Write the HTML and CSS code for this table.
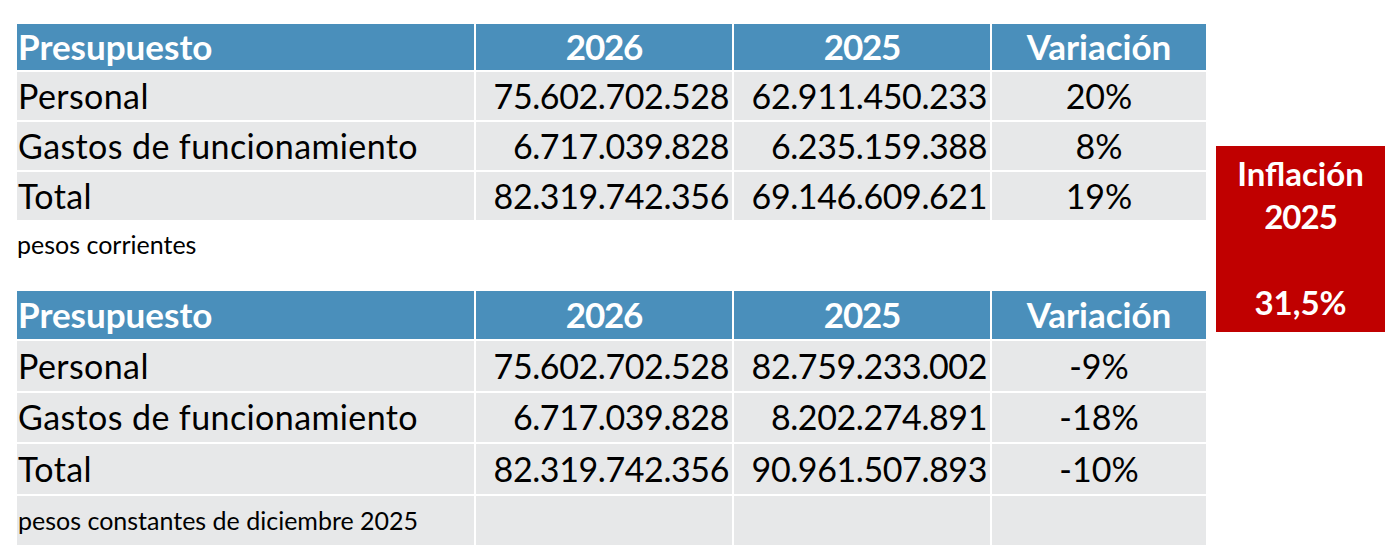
FILE: index.html
```html
<!DOCTYPE html>
<html lang="es">
<head>
<meta charset="utf-8">
<title>Presupuesto</title>
<link rel="stylesheet" href="styles.css">
</head>
<body>
<div class="page">
  <div class="tables">
    <table class="budget">
      <colgroup>
        <col class="c-name"><col class="c-num"><col class="c-num"><col class="c-var">
      </colgroup>
      <thead>
        <tr><th class="name">Presupuesto</th><th class="yr">2026</th><th class="yr">2025</th><th>Variación</th></tr>
      </thead>
      <tbody>
        <tr><td class="name">Personal</td><td class="num">75.602.702.528</td><td class="num">62.911.450.233</td><td class="var">20%</td></tr>
        <tr><td class="name">Gastos de funcionamiento</td><td class="num">6.717.039.828</td><td class="num">6.235.159.388</td><td class="var">8%</td></tr>
        <tr><td class="name">Total</td><td class="num">82.319.742.356</td><td class="num">69.146.609.621</td><td class="var">19%</td></tr>
      </tbody>
    </table>
    <p class="note">pesos corrientes</p>
    <table class="budget budget-tall">
      <colgroup>
        <col class="c-name"><col class="c-num"><col class="c-num"><col class="c-var">
      </colgroup>
      <thead>
        <tr><th class="name">Presupuesto</th><th class="yr">2026</th><th class="yr">2025</th><th>Variación</th></tr>
      </thead>
      <tbody>
        <tr><td class="name">Personal</td><td class="num">75.602.702.528</td><td class="num">82.759.233.002</td><td class="var">-9%</td></tr>
        <tr><td class="name">Gastos de funcionamiento</td><td class="num">6.717.039.828</td><td class="num">8.202.274.891</td><td class="var">-18%</td></tr>
        <tr><td class="name">Total</td><td class="num">82.319.742.356</td><td class="num">90.961.507.893</td><td class="var">-10%</td></tr>
        <tr class="foot"><td class="name">pesos constantes de diciembre 2025</td><td></td><td></td><td></td></tr>
      </tbody>
    </table>
  </div>
  <div class="inflation">
    <span>Inflación</span>
    <span class="yr">2025</span>
    <span>&nbsp;</span>
    <span>31,5%</span>
  </div>
</div>
</body>
</html>
```

FILE: styles.css
```css
html, body {
  margin: 0;
  padding: 0;
  background: #ffffff;
}

body {
  font-family: "Lato", "Open Sans", sans-serif;
  color: #000000;
}

.page {
  display: flex;
  align-items: flex-start;
  padding: 22px 0 0 15px;
  gap: 8px;
}

.tables {
  display: flex;
  flex-direction: column;
}

.budget {
  border-collapse: collapse;
  table-layout: fixed;
  width: 1191px;
}

.c-name { width: 459px; }
.c-num { width: 258px; }
.c-var { width: 216px; }

.budget th,
.budget td {
  border: 2px solid #ffffff;
  padding: 0 3px;
  font-size: 34px;
  line-height: 1;
  white-space: nowrap;
}

.budget th {
  background: #4a8fbb;
  color: #ffffff;
  font-weight: 700;
  font-size: 35px;
  text-align: center;
  height: 44px;
  padding-bottom: 2px;
}

.budget th.yr {
  letter-spacing: -1.2px;
}

.budget td {
  background: #e7e8e9;
  height: 48px;
}

.budget-tall th {
  height: 46px;
}

.budget-tall td {
  height: 49.5px;
}

.budget td.name {
  text-align: left;
  padding-left: 1px;
  letter-spacing: 0.4px;
}

.budget th.name {
  text-align: left;
  padding-left: 1px;
}

.budget td.num {
  text-align: right;
  letter-spacing: -0.4px;
}

.budget td.var {
  text-align: center;
}

.budget tr.foot td.name {
  font-size: 25px;
  letter-spacing: 0;
}

.note {
  margin: 0;
  height: 67px;
  box-sizing: border-box;
  padding: 7px 0 0 2px;
  font-size: 25px;
  line-height: 30px;
}

.inflation {
  margin-top: 124px;
  width: 169px;
  height: 186px;
  box-sizing: border-box;
  padding-top: 6px;
  background: #c00000;
  color: #ffffff;
  font-weight: 700;
  font-size: 33px;
  display: flex;
  flex-direction: column;
  align-items: center;
}

.inflation span {
  line-height: 43px;
}

.inflation .yr {
  letter-spacing: -1px;
}
```
